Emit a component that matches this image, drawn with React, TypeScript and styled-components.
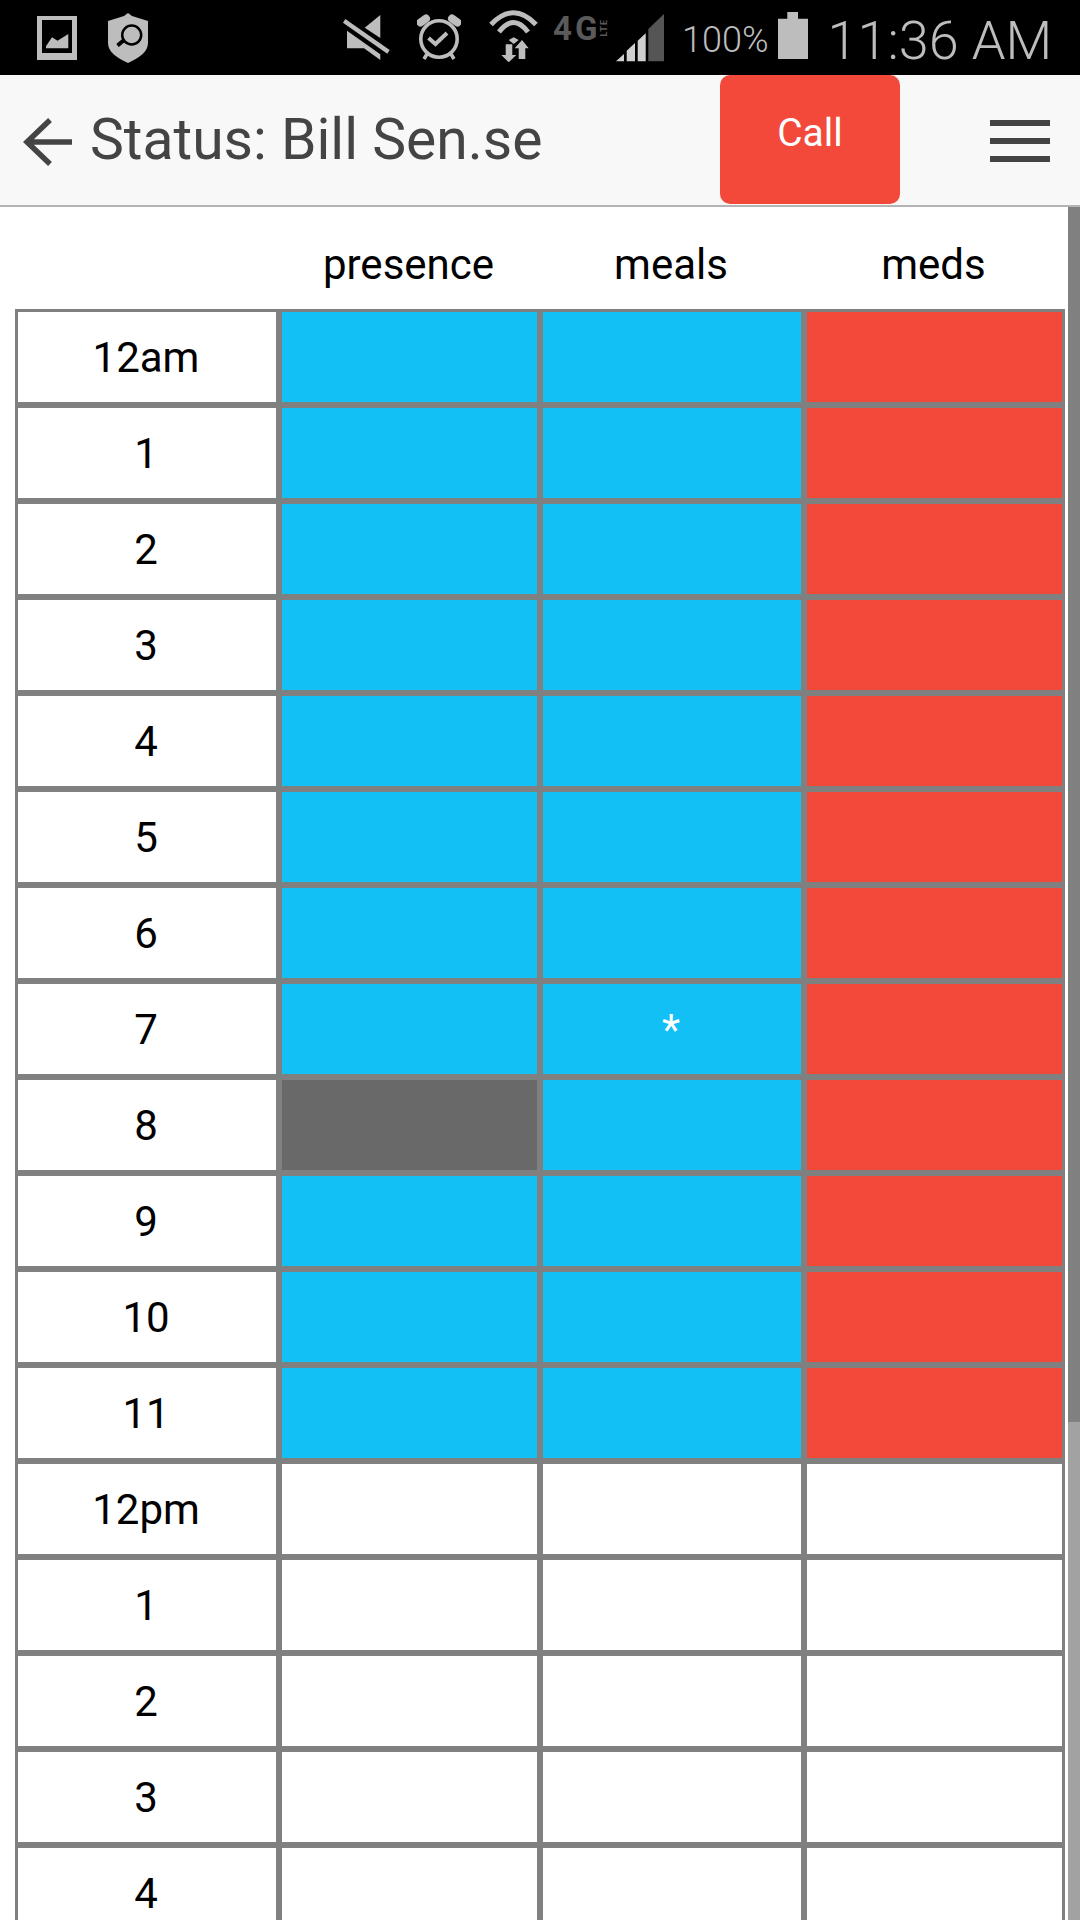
import React from 'react';
import styled, { createGlobalStyle } from 'styled-components';

const GlobalStyle = createGlobalStyle`
  html, body {
    margin: 0;
    padding: 0;
    background: #ffffff;
  }
  body {
    font-family: Roboto, "Liberation Sans", sans-serif;
  }
`;

const Page = styled.div`
  width: 1080px;
  height: 1920px;
  display: flex;
  flex-direction: column;
  overflow: hidden;
  background: #ffffff;
`;

const StatusBar = styled.div`
  flex: none;
  height: 75px;
  display: flex;
  align-items: center;
  padding-left: 37px;
  background: #000000;
  color: #bdbdbd;
`;

const StatusIcon = styled.svg<{ $left?: number; $lift?: number }>`
  flex: none;
  display: block;
  margin-left: ${p => p.$left ?? 0}px;
  margin-bottom: ${p => p.$lift ?? 0}px;
  fill: #bdbdbd;
`;

const NetworkBadge = styled.div`
  flex: none;
  width: 54px;
  height: 23px;
  margin: 0 0 19px 15px;
  display: flex;
  align-items: center;
  justify-content: space-between;
  color: #5a5a5a;
  font-weight: 700;
`;

const NetworkType = styled.span`
  font-size: 33px;
  line-height: 23px;
  letter-spacing: 3px;
`;

const NetworkSub = styled.span`
  writing-mode: vertical-rl;
  transform: rotate(180deg);
  font-size: 9px;
  line-height: 9px;
  letter-spacing: 1px;
`;

const Battery = styled.span`
  margin: 5px 0 0 18px;
  font-size: 36px;
  font-weight: 300;
`;

const Clock = styled.span`
  margin: 5px 0 0 20px;
  font-size: 54px;
  font-weight: 300;
  white-space: nowrap;
`;

const Toolbar = styled.header`
  flex: none;
  height: 130px;
  display: flex;
  align-items: stretch;
  background: #f8f8f8;
  border-bottom: 2px solid #b4b4b4;
`;

const BackButton = styled.svg`
  flex: none;
  align-self: center;
  margin: 3px 0 0 22px;
  stroke: #444444;
  fill: none;
`;

const Title = styled.h1`
  flex: 1;
  margin: 0 0 0 16px;
  align-self: center;
  font-size: 57px;
  font-weight: 400;
  line-height: 76px;
  color: #444444;
  white-space: nowrap;
`;

const CallButton = styled.button`
  flex: none;
  width: 180px;
  height: 129px;
  padding: 0 0 14px;
  border: 0;
  border-radius: 10px;
  background: #f3493b;
  color: #ffffff;
  font-family: inherit;
  font-size: 39px;
`;

const MenuButton = styled.div`
  flex: none;
  display: flex;
  flex-direction: column;
  justify-content: center;
  gap: 12px;
  width: 60px;
  margin: 0 30px 0 90px;
  padding-top: 2px;
`;

const MenuBar = styled.span`
  display: block;
  height: 6px;
  background: #444444;
`;

const Body = styled.main`
  flex: 1;
  min-height: 0;
  display: flex;
`;

const Content = styled.div`
  flex: 1;
  padding: 0 3px 0 15px;
`;

const Grid = styled.div`
  display: grid;
  grid-template-columns: 264px 261px 264px 261px;
  grid-template-rows: 102px;
  grid-auto-rows: 96px;
`;

const HeaderCell = styled.div`
  display: flex;
  align-items: center;
  justify-content: center;
  padding: 13px 2px 0 0;
  font-size: 42px;
  color: #000000;
`;

type Tone = 'empty' | 'blue' | 'red' | 'dark';

const toneColors: Record<Tone, string> = {
  empty: '#ffffff',
  blue: '#12c0f5',
  red: '#f3493b',
  dark: '#696969',
};

const Cell = styled.div<{ $tone?: Tone }>`
  box-sizing: border-box;
  display: flex;
  align-items: center;
  justify-content: center;
  padding-right: 2px;
  border: 3px solid #808080;
  background: ${p => toneColors[p.$tone ?? 'empty']};
  color: ${p => (p.$tone === 'blue' ? '#ffffff' : '#000000')};
  font-size: 42px;
`;

const ScrollTrack = styled.div`
  flex: none;
  width: 12px;
  background: #a2a2a2;
`;

const ScrollThumb = styled.div`
  height: 1215px;
  background: #808080;
`;

const hours = ['12am', '1', '2', '3', '4', '5', '6', '7', '8', '9', '10', '11', '12pm', '1', '2', '3', '4'];

const App: React.FC = () => {
  return (
    <Page>
      <GlobalStyle />
      <StatusBar>
        <StatusIcon width="40" height="44" viewBox="0 0 40 44">
          <path fillRule="evenodd" d="M0 0h40v44H0zM5 4v33h30V4z" />
          <path d="M9 32.3v-2l6-9 5.5 3.5L31.3 18v14.3z" />
        </StatusIcon>
        <StatusIcon width="40" height="50" viewBox="0 0 40 50" $left={31}>
          <path d="M20 0l4 3 16 5v22c0 9-9 15-20 20C9 45 0 39 0 30V8l16-5z" />
          <g fill="none" stroke="#000000">
            <circle cx="23.7" cy="22" r="9.5" strokeWidth="2.5" />
            <path d="M9.5 32.5l6-5" strokeWidth="4" />
          </g>
        </StatusIcon>
        <StatusIcon width="47" height="46" viewBox="0 0 47 46" $left={195}>
          <path d="M37.3 0v23L21.7 12.7zM4 15.7l33.3 23.6V45L21 33.3H4z" />
          <path d="M2.3 4l44.4 31-2.4 3.7L0 7.7z" />
        </StatusIcon>
        <StatusIcon width="44" height="47" viewBox="0 0 44 47" $left={27}>
          <g fill="none" stroke="#bdbdbd">
            <circle cx="22" cy="25" r="18.2" strokeWidth="3.6" />
            <path d="M3.5 8.5L9 4.5M40.5 8.5L35 4.5" strokeWidth="8" strokeLinecap="round" />
            <path d="M11.5 24l7 6 11.5-11" strokeWidth="4" />
            <path d="M10 40l-3 5M34 40l3 5" strokeWidth="3.5" />
          </g>
        </StatusIcon>
        <StatusIcon width="49" height="52" viewBox="0 0 49 52" $left={28} $lift={3}>
          <g fill="none" stroke="#bdbdbd" strokeWidth="5">
            <path d="M2 14.5Q24.5-9 47 14.5" />
            <path d="M10 22Q24.5 3 39 22" />
          </g>
          <path d="M19.7 30l5-2.7 5 2.7-5 4z" />
          <path d="M16.7 34.3h6.6V45h4l-7.6 7.3L12.3 45h4.4zM33 30l6.7 8.3h-3.4V49h-6.6V38.3h-4z" />
        </StatusIcon>
        <NetworkBadge>
          <NetworkType>4G</NetworkType>
          <NetworkSub>LTE</NetworkSub>
        </NetworkBadge>
        <StatusIcon width="48" height="48" viewBox="0 0 48 48" $left={9}>
          <path
            fill="#d0d0d0"
            d="M0 47.3L8 40v7.3zM10.7 47.3V36.7L19 29v18.3zM21.7 47.3V26.7l8-7.4v28z"
          />
          <path fill="#555555" d="M32.3 47.3V15L48 0v47.3z" />
        </StatusIcon>
        <Battery>100%</Battery>
        <StatusIcon width="30" height="47" viewBox="0 0 30 47" $left={9} $lift={4}>
          <path d="M9.3 0H20v6.7h10V47H0V6.7h9.3z" />
        </StatusIcon>
        <Clock>11:36 AM</Clock>
      </StatusBar>
      <Toolbar>
        <BackButton width="52" height="50" viewBox="0 0 52 50" strokeWidth="5.5">
          <path d="M50 25H6M28 3L5 25l23 22" />
        </BackButton>
        <Title>Status: Bill Sen.se</Title>
        <CallButton>Call</CallButton>
        <MenuButton>
          <MenuBar />
          <MenuBar />
          <MenuBar />
        </MenuButton>
      </Toolbar>
      <Body>
        <Content>
          <Grid>
            <HeaderCell />
            <HeaderCell>presence</HeaderCell>
            <HeaderCell>meals</HeaderCell>
            <HeaderCell>meds</HeaderCell>
            {hours.map((hour, i) => {
              const filled = i < 12;
              return (
                <React.Fragment key={`${hour}-${i}`}>
                  <Cell>{hour}</Cell>
                  <Cell $tone={!filled ? 'empty' : i === 8 ? 'dark' : 'blue'} />
                  <Cell $tone={filled ? 'blue' : 'empty'}>{i === 7 ? '*' : null}</Cell>
                  <Cell $tone={filled ? 'red' : 'empty'} />
                </React.Fragment>
              );
            })}
          </Grid>
        </Content>
        <ScrollTrack>
          <ScrollThumb />
        </ScrollTrack>
      </Body>
    </Page>
  );
};

export default App;
